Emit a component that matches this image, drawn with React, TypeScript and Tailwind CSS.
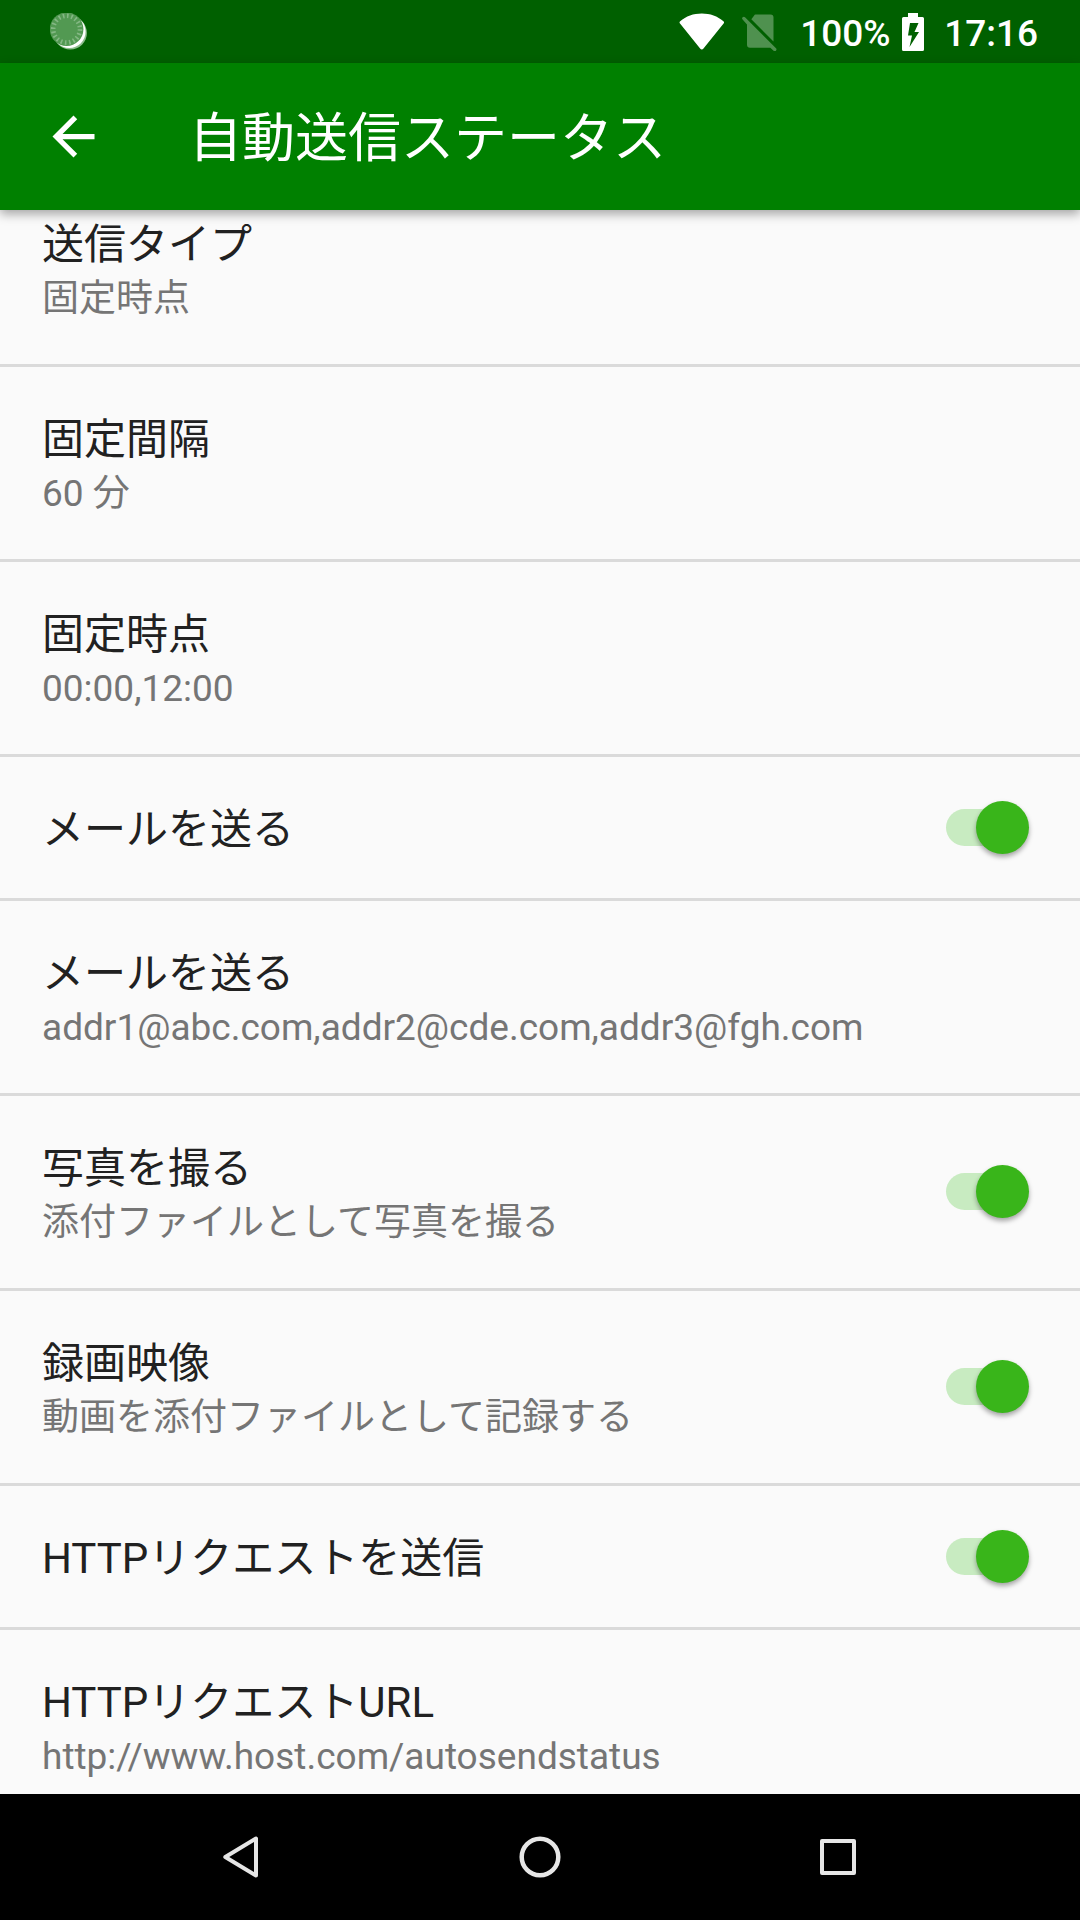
interface SettingItem {
  id: string;
  title: string;
  summary?: string;
  checked?: boolean;
}

const settings: SettingItem[] = [
  { id: 'type', title: '送信タイプ', summary: '固定時点' },
  { id: 'interval', title: '固定間隔', summary: '60 分' },
  { id: 'times', title: '固定時点', summary: '00:00,12:00' },
  { id: 'mail', title: 'メールを送る', checked: true },
  { id: 'mail-to', title: 'メールを送る', summary: 'addr1@abc.com,addr2@cde.com,addr3@fgh.com' },
  { id: 'photo', title: '写真を撮る', summary: '添付ファイルとして写真を撮る', checked: true },
  { id: 'video', title: '録画映像', summary: '動画を添付ファイルとして記録する', checked: true },
  { id: 'http', title: 'HTTPリクエストを送信', checked: true },
  { id: 'http-url', title: 'HTTPリクエストURL', summary: 'http://www.host.com/autosendstatus' },
];

function LoadingIcon() {
  return (
    <svg width="40" height="40" viewBox="0 0 40 40">
      <circle cx="20.3" cy="20" r="16.6" fill="#8dbd8d" />
      <circle cx="19.2" cy="18.6" r="16.4" fill="#fff" />
      <circle cx="16.6" cy="16.2" r="16.8" fill="#529952" />
      <circle
        cx="16.6"
        cy="16.2"
        r="13.4"
        fill="none"
        stroke="#84b884"
        strokeWidth="4.6"
        strokeDasharray="1.6 2.61"
      />
    </svg>
  );
}

function StatusBar() {
  return (
    <div className="flex h-[63px] shrink-0 items-center bg-[#006000] pr-[42px] pl-[50px] text-white">
      <div className="flex-1 pt-[3px]">
        <LoadingIcon />
      </div>
      <svg className="mr-[17px]" width="46" height="38" viewBox="0 0 46 38">
        <path
          d="M1.2 8.2C7 3.2 14.5.5 22.8.5S38.6 3.2 44.4 8.2c.8.7.9 1.5.2 2.4L24.5 35.5c-1 1.2-2.4 1.2-3.4 0L1 10.6c-.7-.9-.6-1.7.2-2.4z"
          fill="#fff"
        />
      </svg>
      <svg className="mr-[23px]" width="35" height="38" viewBox="0 0 35 38">
        <g fill="#fff" fillOpacity=".31">
          <path d="M13.5 1.5H28.500a3 3 0 0 1 3 3V28.500L9.300 6.200 12 2.700Q12.600 1.500 13.500 1.500z" />
          <path d="M3 4.200 34 35.300a1.700 1.700 0 0 1-2.400 2.400L28.300 34.700H8a3 3 0 0 1-3-3V11.400L.6 6.600A1.700 1.700 0 0 1 3 4.200z" />
        </g>
      </svg>
      <span className="w-[102px] pt-[3px] text-[37px] leading-none font-medium">100%</span>
      <svg className="mr-[20px]" width="22" height="38" viewBox="0 0 22 38">
        <path
          fillRule="evenodd"
          d="M6 0h10v4h4.500Q22 4 22 5.500v31Q22 38 20.500 38h-19Q0 38 0 36.500v-31Q0 4 1.500 4H6zM8 10 6 22.500h4L7.500 34 17 19h-4.500l4-9z"
          fill="#fff"
        />
      </svg>
      <span className="pt-[3px] text-[37px] leading-none font-medium">17:16</span>
    </div>
  );
}

function AppBar() {
  return (
    <header className="relative z-10 flex h-[147px] shrink-0 items-center bg-[#008000] pl-[42px] text-white shadow-[0_4px_10px_rgba(0,0,0,0.35)]">
      <button className="mr-[84px]" aria-label="戻る">
        <svg width="63" height="63" viewBox="0 0 24 24" fill="#fff">
          <path d="M20 11H7.830l5.590-5.590L12 4l-8 8 8 8 1.410-1.410L7.830 13H20v-2z" />
        </svg>
      </button>
      <h1 className="pt-[4px] text-[53px] leading-[64px]">自動送信ステータス</h1>
    </header>
  );
}

function Switch() {
  return (
    <span role="switch" aria-checked="true" className="flex h-[37px] w-[92px] items-center">
      <span className="flex h-[37px] w-[78px] items-center rounded-full bg-[#c8ebc1]">
        <span className="ml-[30px] size-[53px] shrink-0 rounded-full bg-[#39b51a] shadow-[0_3px_5px_rgba(0,0,0,0.35)]" />
      </span>
    </span>
  );
}

function SettingRow({ item }: { item: SettingItem }) {
  return (
    <li
      className={`flex shrink-0 items-center justify-between border-b-[3px] border-[#dadada] px-[42px] ${
        item.summary ? 'h-[195px] pb-px' : 'h-[144px]'
      }`}
    >
      <div className="pt-[5px]">
        <p className="text-[42px] leading-[56px] text-[#212121]">{item.title}</p>
        {item.summary && <p className="text-[37px] leading-[51px] text-[#757575]">{item.summary}</p>}
      </div>
      {item.checked && <Switch />}
    </li>
  );
}

function NavBar() {
  return (
    <nav className="grid h-[126px] shrink-0 grid-cols-3 place-items-center bg-black px-[92px]">
      <svg width="42" height="42" viewBox="0 0 42 42" fill="none" stroke="#e6e6e6" strokeWidth="4" strokeLinejoin="round">
        <path d="M5.300 21 36 2.500V39.500z" />
      </svg>
      <svg width="42" height="42" viewBox="0 0 42 42" fill="none" stroke="#e6e6e6" strokeWidth="4.5">
        <circle cx="21" cy="21" r="18.3" />
      </svg>
      <svg width="42" height="42" viewBox="0 0 42 42" fill="none" stroke="#e6e6e6" strokeWidth="4" strokeLinejoin="round">
        <path d="M4 5h32v32h-32z" />
      </svg>
    </nav>
  );
}

export default function App() {
  return (
    <div
      lang="ja"
      className="flex h-[1920px] w-[1080px] flex-col overflow-hidden bg-[#fafafa] font-['Roboto','Noto_Sans_CJK_JP',sans-serif]"
    >
      <StatusBar />
      <AppBar />
      <main className="flex-1 overflow-hidden">
        {/* list is scrolled slightly under the app bar */}
        <ul className="-mt-[38px] flex flex-col">
          {settings.map((item) => (
            <SettingRow key={item.id} item={item} />
          ))}
        </ul>
      </main>
      <NavBar />
    </div>
  );
}
